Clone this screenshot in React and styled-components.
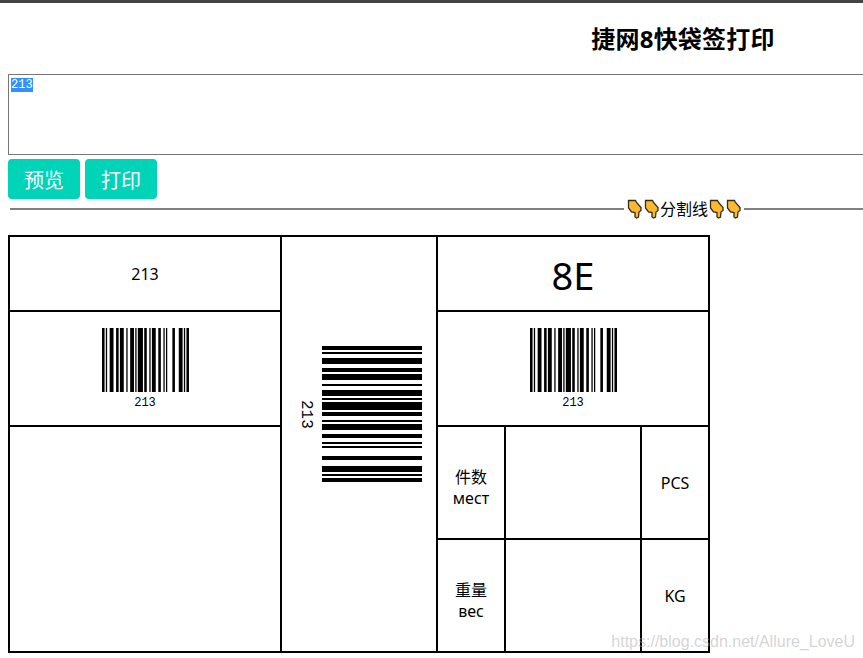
import React from 'react';
import styled, { createGlobalStyle } from 'styled-components';

const BARS = '11010011100' + '11011100100' + '11101011110' + '11001011100' + '11001010000' + '1100011101011';

function Barcode({ vertical, length, thickness }) {
  const rects = [];
  for (let i = 0; i < BARS.length; i++) {
    if (BARS[i] !== '1') continue;
    let run = 1;
    while (BARS[i + run] === '1') run++;
    rects.push(vertical
      ? <rect key={i} x="0" y={i} width="1" height={run} />
      : <rect key={i} x={i} y="0" width={run} height="1" />);
    i += run - 1;
  }
  return (
    <svg
      width={vertical ? thickness : length}
      height={vertical ? length : thickness}
      viewBox={vertical ? `0 0 1 ${BARS.length}` : `0 0 ${BARS.length} 1`}
      preserveAspectRatio="none"
      fill="#000"
    >
      {rects}
    </svg>
  );
}

function Hand() {
  return (
    <svg width="17" height="20" viewBox="0 0 17 20">
      <path
        d="M2.5 1.5 L9.5 1.5 L10.5 3.5 L15 8.5 L15 11.5 L13 13 L12.5 18 L10.5 19 L9 18 L9 13.5 L5.5 13 L2.5 9 Z"
        fill="#fdb92e"
        stroke="#332a1a"
        strokeWidth="1.3"
        strokeLinejoin="miter"
      />
    </svg>
  );
}

export default function App() {
  const inputRef = React.useRef(null);

  React.useEffect(() => {
    inputRef.current.focus();
    inputRef.current.select();
  }, []);

  return (
    <>
      <GlobalStyle />
      <TopBar />
      <Page>
        <Title>捷网8快袋签打印</Title>
        <Input ref={inputRef} defaultValue="213" />
        <Buttons>
          <Button>预览</Button>
          <Button>打印</Button>
        </Buttons>
        <Divider>
          <Hand />
          <Hand />
          <DividerText>分割线</DividerText>
          <Hand />
          <Hand />
        </Divider>
        <Label>
          <Cell $col="1" $row="1">213</Cell>
          <BarcodeCell $col="1" $row="2">
            <Barcode length={87} thickness={64} />
            <BarcodeText>213</BarcodeText>
          </BarcodeCell>
          <Cell $col="1" $row="3 / span 2" />
          <SideCell $col="2" $row="1 / span 4">
            <SideText>213</SideText>
            <Barcode vertical length={136} thickness={100} />
          </SideCell>
          <BigCell $col="3 / span 3" $row="1">8E</BigCell>
          <BarcodeCell $col="3 / span 3" $row="2">
            <Barcode length={87} thickness={64} />
            <BarcodeText>213</BarcodeText>
          </BarcodeCell>
          <NameCell $col="3" $row="3">件数<br />мест</NameCell>
          <Cell $col="4" $row="3" />
          <Cell $col="5" $row="3">PCS</Cell>
          <NameCell $col="3" $row="4">重量<br />вес</NameCell>
          <Cell $col="4" $row="4" />
          <Cell $col="5" $row="4">KG</Cell>
        </Label>
      </Page>
      <Watermark>https://blog.csdn.net/Allure_LoveU</Watermark>
    </>
  );
}

const GlobalStyle = createGlobalStyle`
  html, body {
    margin: 0;
    height: 100%;
    overflow: hidden;
    background: #fff;
  }
  body {
    font-family: "Noto Sans", "Noto Sans CJK SC", sans-serif;
    color: #000;
  }
`;

const TopBar = styled.div`
  height: 3px;
  background: #444;
`;

const Page = styled.div`
  width: 1366px;
  box-sizing: border-box;
  padding: 0 8px;
`;

const Title = styled.h1`
  margin: 18px 0 17px;
  font-size: 24px;
  line-height: 36px;
  font-weight: 700;
  letter-spacing: 0.2px;
  text-align: center;
`;

const Input = styled.textarea`
  display: block;
  box-sizing: border-box;
  width: 100%;
  height: 81px;
  padding: 4px 2px;
  border: 1px solid #767676;
  border-radius: 0;
  outline: none;
  resize: none;
  font-family: "Liberation Mono", monospace;
  font-size: 12px;
  line-height: 13px;

  &::selection {
    background: #3390ff;
    color: #fff;
  }
`;

const Buttons = styled.div`
  display: flex;
  gap: 5px;
  margin-top: 4px;
`;

const Button = styled.button`
  width: 72px;
  height: 40px;
  padding: 0;
  border: none;
  border-radius: 4px;
  background: #00d4b8;
  color: #fff;
  font-family: "Noto Sans CJK SC", sans-serif;
  font-size: 20px;
`;

const Divider = styled.div`
  display: flex;
  align-items: center;
  justify-content: center;
  height: 20px;
  margin: 0 0 16px 2px;

  &::before, &::after {
    content: "";
    flex: 1;
    height: 2px;
    background: #808080;
  }
  &::before { margin-right: 2px; }
  &::after { margin-left: 2px; }
`;

const DividerText = styled.span`
  font-size: 16px;
  line-height: 20px;
`;

const Label = styled.div`
  display: grid;
  grid-template-columns: 270px 154px 66px 134px 66px;
  grid-template-rows: 73px 113px 111px 111px;
  gap: 2px;
  width: 702px;
  box-sizing: border-box;
  padding: 2px;
  background: #000;
`;

const Cell = styled.div`
  grid-column: ${p => p.$col};
  grid-row: ${p => p.$row};
  display: flex;
  flex-direction: column;
  align-items: center;
  justify-content: center;
  box-sizing: border-box;
  padding-top: 2px;
  background: #fff;
  font-size: 16px;
  line-height: 21px;
  text-align: center;
`;

const NameCell = styled(Cell)`
  display: block;
  padding-top: 40px;
`;

const BigCell = styled(Cell)`
  font-size: 38px;
  line-height: 48px;
`;

const BarcodeCell = styled(Cell)`
  justify-content: flex-start;
  padding-top: 16px;
`;

const BarcodeText = styled.div`
  font-family: "Liberation Mono", monospace;
  font-size: 12px;
  line-height: 23px;
`;

const SideCell = styled(Cell)`
  flex-direction: row;
  justify-content: center;
  gap: 7px;
  padding: 0 0 60px;
`;

const SideText = styled.div`
  writing-mode: vertical-rl;
  font-family: "Liberation Mono", monospace;
  font-size: 16px;
  line-height: 18px;
`;

const Watermark = styled.div`
  position: absolute;
  right: 8px;
  bottom: 6px;
  font-family: "Liberation Sans", sans-serif;
  font-size: 16px;
  line-height: 20px;
  color: rgba(170, 170, 170, 0.5);
`;
